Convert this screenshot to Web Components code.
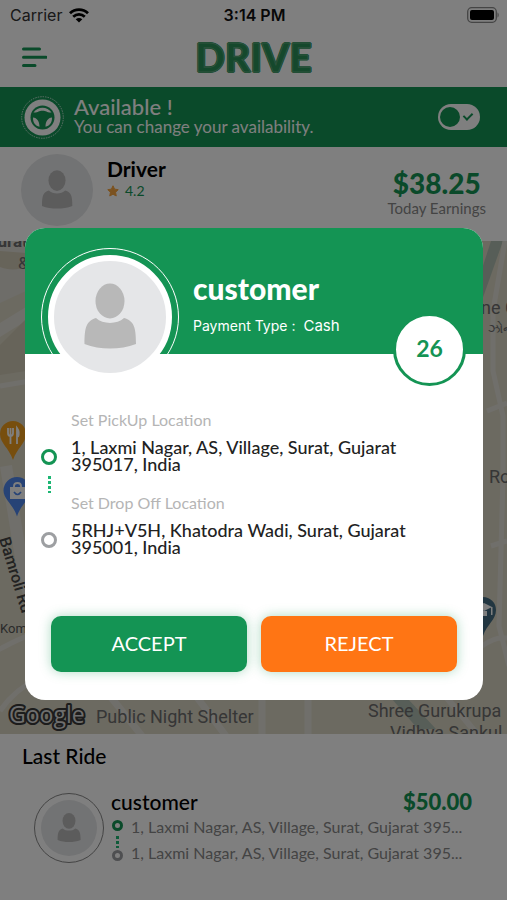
<!DOCTYPE html>
<html lang="en">
<head>
<meta charset="utf-8">
<meta name="viewport" content="width=device-width, initial-scale=1">
<title>Drive</title>
<style>
  html, body { margin: 0; }
  body { font-family: Lato, "Liberation Sans", sans-serif; background: #fff; color: #000; }
</style>
</head>
<body>
<drive-app></drive-app>

<script>
const define = (name, html) => {
  const template = document.createElement('template');
  template.innerHTML = html;
  customElements.define(name, class extends HTMLElement {
    constructor() {
      super();
      this.attachShadow({ mode: 'open' }).append(template.content.cloneNode(true));
    }
  });
};

/* Round placeholder portrait; size, ring and frame come from custom properties. */
define('user-avatar', `
<style>
  :host { display: grid; place-items: center; box-sizing: border-box; flex: none;
    width: var(--size, 72px); height: var(--size, 72px); border-radius: 50%;
    border: var(--ring, 0 solid transparent); padding: var(--gap, 0px); }
  svg { display: block; box-sizing: border-box; width: 100%; height: 100%; padding: var(--inset, 3px);
    border-radius: 50%; border: var(--frame, 0 solid #fff); background: #e5e6e8; }
</style>
<svg viewBox="0 0 112 112" role="img" aria-label="Profile picture">
  <ellipse cx="56" cy="40" rx="14.5" ry="17.5" fill="#b8b8b8"/>
  <path fill="#b8b8b8" d="M42 57c7 6.500 21 6.500 28 0 10 3 12 9 12 26C66 89 46 89 30.500 83 30.500 66 32.500 60 42 57z"/>
</svg>`);

define('status-bar', `
<style>
  :host { display: grid; grid-template-columns: 1fr auto 1fr; align-items: center; height: 30px;
    padding: 0 8px 0 10px; font: 16px/20px Inter, "Liberation Sans", sans-serif; color: #111; }
  .left { display: flex; align-items: center; gap: 7px; color: #333; }
  time { font-weight: 600; }
  .battery { justify-self: end; }
  svg { display: block; }
</style>
<span class="left"><span>Carrier</span>
  <svg width="20" height="15" viewBox="0 0 20 15" fill="none" stroke="#000" stroke-width="2.800" aria-hidden="true">
    <path d="M1 5.200c5-4.800 13-4.800 18 0M4.200 8.700c3.400-3.100 8.200-3.100 11.600 0"/>
    <path d="M10 14.500 6.700 11.300c2-1.700 4.600-1.700 6.600 0z" fill="#000" stroke="none"/>
  </svg></span>
<time>3:14 PM</time>
<svg class="battery" width="32" height="16" viewBox="0 0 32 16" aria-hidden="true">
  <rect x=".7" y=".7" width="28.600" height="14.600" rx="4" fill="none" stroke="#8a8a8a" stroke-width="1.300"/>
  <rect x="3" y="3" width="24" height="10" rx="2"/>
  <path d="M30.500 5.500c1.600.6 1.600 4.400 0 5z" fill="#8a8a8a"/>
</svg>`);

define('app-header', `
<style>
  :host { display: grid; grid-template-columns: 1fr auto 1fr; align-items: center; height: 57px; padding: 0 21px; }
  button { justify-self: start; border: 0; padding: 0 0 4px; background: none; }
  svg { display: block; }
  h1 { margin: 0; padding-bottom: 3px; font: 900 39px/50px Lato, sans-serif; color: #2a9058;
    -webkit-text-stroke: 1px #5aa57a;
    text-shadow: 1px 0 #2a9058, -1px 0 #2a9058, 0 1px #2a9058, 0 -1px #2a9058; }
</style>
<button aria-label="Open menu"><svg width="26" height="22" viewBox="0 0 26 22" stroke="#149454" stroke-width="3" stroke-linecap="round"><path d="M2.500 3h16M2.500 11.200h22.500M2.500 19.500H14"/></svg></button>
<h1>DRIVE</h1>`);

define('availability-banner', `
<style>
  :host { display: flex; align-items: center; height: 60px; padding: 0 27px 0 21px; background: #149454; color: #fff; }
  svg { display: block; margin-right: 10px; flex: none; }
  .text { flex: 1; padding-bottom: 2px; }
  strong { display: block; font-weight: 500; font-size: 22px; line-height: 22px; }
  span { display: block; font-size: 17px; line-height: 18px; }
  input { appearance: none; position: relative; margin: 0; width: 42px; height: 26px; border-radius: 13px; background: #fff; }
  input::before { content: ""; position: absolute; left: 2px; top: 3px; width: 20px; height: 20px; border-radius: 50%; background: #149454; }
  input::after { content: ""; position: absolute; right: 9px; top: 7px; width: 4px; height: 7px;
    border: solid #149454; border-width: 0 2px 2px 0; transform: rotate(45deg); }
</style>
<svg width="43" height="43" viewBox="0 0 43 43" aria-hidden="true">
  <circle cx="21.500" cy="21.500" r="20.800" fill="none" stroke="#fff" stroke-opacity=".7" stroke-dasharray="1.500 1"/>
  <circle cx="21.500" cy="21.500" r="18" fill="#fff"/>
  <circle cx="21.500" cy="21.500" r="12" fill="#149454"/>
  <path fill="#fff" d="M12.500 16.500c4-6.500 14-6.500 18 0-5 .2-5-1.700-9-1.700s-4 1.900-9 1.700zM12 21.500c4 .5 6.500 3.500 6.500 9.300-4-1-6.700-4.300-6.500-9.300zM31 21.500c-4 .5-6.500 3.500-6.500 9.300 4-1 6.700-4.300 6.500-9.300z"/>
</svg>
<label class="text" for="sw"><strong>Available !</strong><span>You can change your availability.</span></label>
<input id="sw" type="checkbox" role="switch" checked>`);

define('driver-summary', `
<style>
  :host { display: flex; height: 94px; padding: 0 21px; box-sizing: border-box; }
  user-avatar { margin: 7px 14px 0 0; }
  .who { flex: 1; padding-top: 10px; }
  h2 { margin: 0; font-size: 21px; line-height: 24px; font-weight: 700; }
  .rate { display: flex; align-items: center; gap: 6px; font-size: 14px; line-height: 20px; color: #149454; }
  .earn { padding-top: 21px; text-align: center; }
  b { display: block; font-size: 28px; line-height: 31px; font-weight: 900; color: #149454; }
  small { display: block; font-size: 15px; line-height: 18px; color: #888; }
</style>
<user-avatar></user-avatar>
<div class="who"><h2>Driver</h2>
  <div class="rate"><svg width="12" height="12" viewBox="0 0 24 24" fill="#f7a540" stroke="#f7a540" stroke-width="2" stroke-linejoin="round" aria-hidden="true"><path d="M12 1.500l3.200 6.800 7.300 1-5.300 5.200 1.300 7.500L12 18.400 5.500 22l1.300-7.500L1.500 9.300l7.300-1z"/></svg>4.2</div></div>
<div class="earn"><b>$38.25</b><small>Today Earnings</small></div>`);

define('city-map', `
<style>
  :host { display: block; position: relative; overflow: hidden; background: #d9d4c3; }
  svg.map { position: absolute; inset: 0; width: 100%; height: 100%; font-family: Roboto, sans-serif; fill: #6c6c6c; }
  .end { overflow: visible; }
  .road { fill: none; stroke: #e1dfd7; }
</style>
<svg class="map" role="img" aria-label="Map of Surat">
  <path d="M0 0h26v50L0 62z" fill="#dcdad2"/>
  <path class="road" stroke-width="12" d="M-5 92 34 68M6 225l18 110 30 110"/>
  <path class="road" stroke-width="5" d="M0 145l30-5M-4 410c20-10 30-18 60-20M0 470c20-30 50-40 90-50"/>
  <path d="M0 26c8 3 20 4 26-2V12L0 10zM26 78 0 104v30l26-4z" fill="#cfc8b4"/>
  <g>
    <path fill="#ee9c1d" d="M13 180a13 13 0 0 1 13 13c0 9-9 14-13 26-4-12-13-17-13-26a13 13 0 0 1 13-13z"/>
    <path d="M8 187v5q0 3 2.500 3t2.500-3v-5M10.500 187v16M17 203v-16q3 4 1 9" fill="none" stroke="#fff" stroke-width="1.800"/>
    <path fill="#4f86ec" d="M17 236a13.500 13.500 0 0 1 13.500 13.500c0 9-10 14-13.500 26-3.500-12-13.500-17-13.500-26A13.500 13.500 0 0 1 17 236z"/>
    <path d="M10 246h15v12H10z" fill="#fff"/><path d="M14 248v-3q0-3 3.500-3t3.500 3v3" fill="none" stroke="#fff" stroke-width="1.800"/><path d="M14 251q3.500 5 7 0" fill="none" stroke="#4f86ec" stroke-width="1.600"/>
  </g>
  <text x="-13" y="6" font-size="17" font-weight="700">Surat</text>
  <text x="18" y="28" font-size="17">&amp;</text>
  <text transform="translate(-1 298) rotate(73)" font-size="16" font-weight="500" fill="#444">Bamroli Rd</text>
  <text x="0" y="392" font-size="13" fill="#555">Kom</text>
  <svg class="end" x="100%">
    <path d="M-16 0h12l-22 62h-10z" fill="#aebdb0"/>
    <path class="road" stroke-width="5" d="M-2 0-14 70v60l10 45v60l-4 150 10 40M-20 170 0 162M-16 305l16-5M-25 405q14-10 25-8"/>
    <text x="-26" y="73" font-size="18">ne C</text>
    <text x="-19" y="92" font-size="13">ઝોન</text>
    <text x="-18" y="242" font-size="18">Road</text>
    <path fill="#456d83" d="M-24 356a13 13 0 0 1 13 13c0 10-9 14-13 26-4-12-13-16-13-26a13 13 0 0 1 13-13z"/>
    <path fill="#fff" d="M-31 366l8-4 8 4-8 4zM-27 370v5h7v-5zM-16 366h1.500v8h-1.500z"/>
  </svg>
  <svg class="end" y="100%">
    <path class="road" stroke-width="7" d="M110-38 142 2M262-50v52M308-50v52M196-38l30 40"/>
    <text x="96" y="-11" font-size="18">Public Night Shelter</text>
    <text x="9" y="-11" font-family="Open Sans" font-size="23" font-weight="500" fill="#dcdcdc" stroke="#383838" stroke-width="4" paint-order="stroke" stroke-linejoin="round">Google</text>
  </svg>
  <svg class="end" x="100%" y="100%">
    <path d="M-115-35h16l28 30h-18z" fill="#aebdb0"/>
    <path class="road" stroke-width="6" d="M-60-36-30 0"/>
    <text x="-139" y="-17" font-size="18">Shree Gurukrupa</text>
    <text x="-117" y="5" font-size="18">Vidhya Sankul</text>
  </svg>
</svg>`);

/* Ring marker for a stop, with an optional dotted trail to the next one. */
define('stop-marker', `
<style>
  :host { display: flex; flex-direction: column; align-items: center; gap: var(--trail-gap, 11px); color: #9d9fa2; }
  :host([start]) { color: #149454; }
  i { box-sizing: border-box; width: var(--dot, 16px); height: var(--dot, 16px); border: var(--stroke, 3px) solid; border-radius: 50%; background: #fff; }
  u { display: none; width: 3px; height: var(--trail, 17px);
    background: repeating-linear-gradient(#1cb673 0 3px, transparent 3px 5px); }
  :host([start]) u { display: block; }
</style><i></i><u></u>`);

define('last-ride', `
<style>
  :host { display: block; padding: 11px 35px 32px 22px; background: #fff; }
  h2 { margin: 0; font-size: 21px; line-height: 22px; font-weight: 500; }
  article { display: flex; margin: 25px 0 0 12px; gap: 7px; }
  user-avatar { --size: 70px; --ring: 1px solid #888; --gap: 6px; margin-top: 1px; }
  .info { flex: 1; min-width: 0; }
  .top { display: flex; justify-content: space-between; line-height: 20px; margin-bottom: 4px; }
  h3 { margin: 0; font-size: 21px; font-weight: 500; }
  b { font-size: 22px; font-weight: 900; color: #149454; }
  .row { display: grid; grid-template-columns: 12px 1fr; column-gap: 8px; height: 26px; color: #888; }
  .row span { font-size: 16px; line-height: 22px; white-space: nowrap; }
  stop-marker { --dot: 11px; --stroke: 3px; --trail: 12px; --trail-gap: 5px; padding-top: 4px; }
  stop-marker:not([start]) { padding-top: 8px; }
</style>
<h2>Last Ride</h2>
<article>
  <user-avatar></user-avatar>
  <div class="info">
    <div class="top"><h3>customer</h3><b>$50.00</b></div>
    <div class="row"><stop-marker start></stop-marker><span>1, Laxmi Nagar, AS, Village, Surat, Gujarat 395...</span></div>
    <div class="row"><stop-marker></stop-marker><span>1, Laxmi Nagar, AS, Village, Surat, Gujarat 395...</span></div>
  </div>
</article>`);

define('trip-stop', `
<style>
  :host { display: grid; grid-template-columns: 16px 1fr; column-gap: 14px; padding-bottom: 20px; }
  .marker { padding-top: 39px; margin-bottom: -20px; }
  .label { font-size: 16px; line-height: 20px; color: #b5b5b5; }
  .address { margin-top: 9px; max-width: 360px; font-size: 18px; line-height: 17px; font-weight: 500; color: #222; }
</style>
<div class="marker"><slot name="marker"></slot></div>
<div><div class="label"><slot name="label"></slot></div><div class="address"><slot></slot></div></div>`);

define('action-button', `
<style>
  :host { display: block; flex: 1; }
  button { width: 100%; height: 56px; border: 0; border-radius: 10px; padding: 0 0 3px; background: var(--fill, #149454); color: #fff;
    font: 20px/24px Lato, sans-serif; box-shadow: 0 0 12px rgba(20, 148, 84, .35); }
</style><button type="button"><slot></slot></button>`);

define('ride-request', `
<style>
  :host { display: block; border-radius: 20px; background: #fff; }
  header { position: relative; display: flex; height: 126px; box-sizing: border-box; padding: 20px 16px 0; gap: 14px;
    border-radius: 20px 20px 0 0; background: #149454; color: #fff; }
  user-avatar { --size: 138px; --ring: 1px solid #fff; --gap: 6px; --frame: 6px solid #fff; --inset: 0; }
  h2 { margin: 24px 0 12px; font-size: 30px; line-height: 32px; font-weight: 900; }
  p { margin: 0; display: flex; align-items: baseline; gap: 8px; font: 14px/20px Inter, sans-serif; }
  p b { font-weight: 400; font-size: 15px; }
  .timer { position: absolute; right: 17px; bottom: -32px; display: grid; place-items: center; box-sizing: border-box; padding-bottom: 4px;
    width: 73px; height: 73px; border: 3px solid #149454; border-radius: 50%; background: #fff; color: #149454; font-size: 23px; line-height: 28px; font-weight: 700; }
  .route { padding: 56px 16px 0; }
  footer { display: flex; gap: 14px; padding: 40px 26px 28px; }
</style>
<header>
  <user-avatar></user-avatar>
  <div><h2>customer</h2><p><span>Payment Type :</span><b>Cash</b></p></div>
  <div class="timer" role="timer">26</div>
</header>
<div class="route">
  <trip-stop><stop-marker slot="marker" start></stop-marker><span slot="label">Set PickUp Location</span>1, Laxmi Nagar, AS, Village, Surat, Gujarat 395017, India</trip-stop>
  <trip-stop><stop-marker slot="marker"></stop-marker><span slot="label">Set Drop Off Location</span>5RHJ+V5H, Khatodra Wadi, Surat, Gujarat 395001, India</trip-stop>
</div>
<footer><action-button>ACCEPT</action-button><action-button style="--fill:#ff7514">REJECT</action-button></footer>`);

define('modal-overlay', `
<style>
  :host { position: absolute; inset: 0; box-sizing: border-box; display: flex; flex-direction: column; justify-content: center;
    padding: 28px 24px 0 25px; background: rgba(0, 0, 0, .5); }
</style><slot></slot>`);

define('drive-app', `
<style>
  :host { position: relative; display: flex; flex-direction: column; min-height: 100vh; }
  city-map { flex: 1; min-height: 300px; }
</style>
<status-bar></status-bar>
<app-header></app-header>
<availability-banner></availability-banner>
<driver-summary></driver-summary>
<city-map></city-map>
<last-ride></last-ride>
<modal-overlay><ride-request role="dialog" aria-modal="true" aria-label="Ride request"></ride-request></modal-overlay>`);
</script>
</body>
</html>
